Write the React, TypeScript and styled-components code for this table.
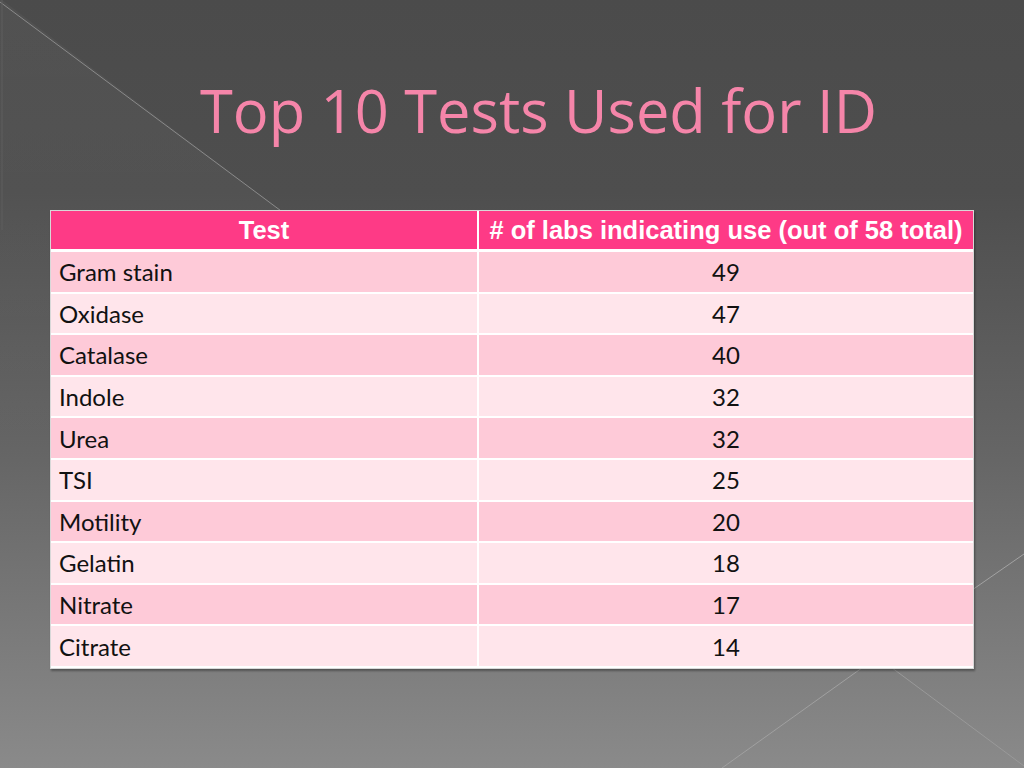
import React from "react";
import styled, { createGlobalStyle } from "styled-components";

const Global = createGlobalStyle`
  html, body { margin: 0; padding: 0; }
  body { width: 1024px; height: 768px; overflow: hidden; }
`;

const Slide = styled.div`
  position: relative;
  width: 1024px;
  height: 768px;
  overflow: hidden;
  background: linear-gradient(180deg, #4b4b4b 0%, #4e4e4e 25%, #666666 60%, #8a8a8a 100%);
  display: flex;
  flex-direction: column;
  align-items: flex-start;
`;

const Backdrop = styled.svg`
  position: absolute;
  inset: 0;
  width: 1024px;
  height: 768px;
`;

const Title = styled.h1`
  position: relative;
  margin: 80px 0 0 200px;
  font-family: "Open Sans", "Noto Sans", sans-serif;
  font-weight: 400;
  font-size: 59.6px;
  line-height: 60px;
  color: #f585a9;
  white-space: nowrap;
`;

const TableFrame = styled.div`
  position: relative;
  margin: 70px 0 0 50px;
  width: 922px;
  border: 1px solid #d8d8d8;
  box-shadow: 1px 2px 2px rgba(0, 0, 0, 0.35);
  background: #ffffff;
`;

const Grid = styled.table`
  width: 100%;
  border-collapse: collapse;
  table-layout: fixed;
`;

const HeadCell = styled.th<{ $w?: number }>`
  background: #fe3a86;
  color: #ffffff;
  font-family: "Liberation Sans", Arial, sans-serif;
  font-weight: 700;
  font-size: 25.5px;
  height: 38px;
  padding: 0;
  text-align: center;
  border-right: 2px solid #ffffff;
  border-bottom: 3px solid #ffffff;
  white-space: nowrap;
  width: ${(p) => (p.$w ? `${p.$w}px` : "auto")};
  &:last-child { border-right: none; }
`;

const Row = styled.tr<{ $odd: boolean }>`
  background: ${(p) => (p.$odd ? "#fecad8" : "#ffe5eb")};
`;

const Cell = styled.td<{ $center?: boolean }>`
  font-family: Lato, "Carlito", sans-serif;
  font-size: 24px;
  color: #111111;
  height: 39.6px;
  padding: 0 0 0 8px;
  text-align: ${(p) => (p.$center ? "center" : "left")};
  border-right: 2px solid #ffffff;
  border-bottom: 2px solid #ffffff;
  &:last-child { border-right: none; padding-left: 0; }
`;

const data: [string, number][] = [
  ["Gram stain", 49],
  ["Oxidase", 47],
  ["Catalase", 40],
  ["Indole", 32],
  ["Urea", 32],
  ["TSI", 25],
  ["Motility", 20],
  ["Gelatin", 18],
  ["Nitrate", 17],
  ["Citrate", 14],
];

export default function App() {
  return (
    <>
      <Global />
      <Slide>
        <Backdrop viewBox="0 0 1024 768">
          <defs>
            <linearGradient id="fade" x1="0" y1="0" x2="0" y2="1">
              <stop offset="0" stopColor="#ffffff" stopOpacity="0.035" />
              <stop offset="0.35" stopColor="#ffffff" stopOpacity="0.02" />
              <stop offset="0.6" stopColor="#ffffff" stopOpacity="0" />
            </linearGradient>
          </defs>
          <polygon points="0,0 2,0 300,225 300,768 0,768" fill="url(#fade)" />
          <line x1="0" y1="2" x2="300" y2="225" stroke="#8a8a8a" strokeWidth="1" />
          <line x1="2" y1="0" x2="2" y2="230" stroke="#5e5e5e" strokeWidth="1" />
          <line x1="1024" y1="554" x2="900" y2="640" stroke="#a2a2a2" strokeWidth="1" />
          <line x1="880" y1="655" x2="722" y2="768" stroke="#a0a0a0" strokeWidth="1" />
          <line x1="876" y1="656" x2="1024" y2="766" stroke="#999999" strokeWidth="1" />
        </Backdrop>
        <Title>Top 10 Tests Used for ID</Title>
        <TableFrame>
          <Grid>
            <thead>
              <tr>
                <HeadCell $w={426}>Test</HeadCell>
                <HeadCell># of labs indicating use (out of 58 total)</HeadCell>
              </tr>
            </thead>
            <tbody>
              {data.map(([name, n], i) => (
                <Row key={name} $odd={i % 2 === 0}>
                  <Cell>{name}</Cell>
                  <Cell $center>{n}</Cell>
                </Row>
              ))}
            </tbody>
          </Grid>
        </TableFrame>
      </Slide>
    </>
  );
}
